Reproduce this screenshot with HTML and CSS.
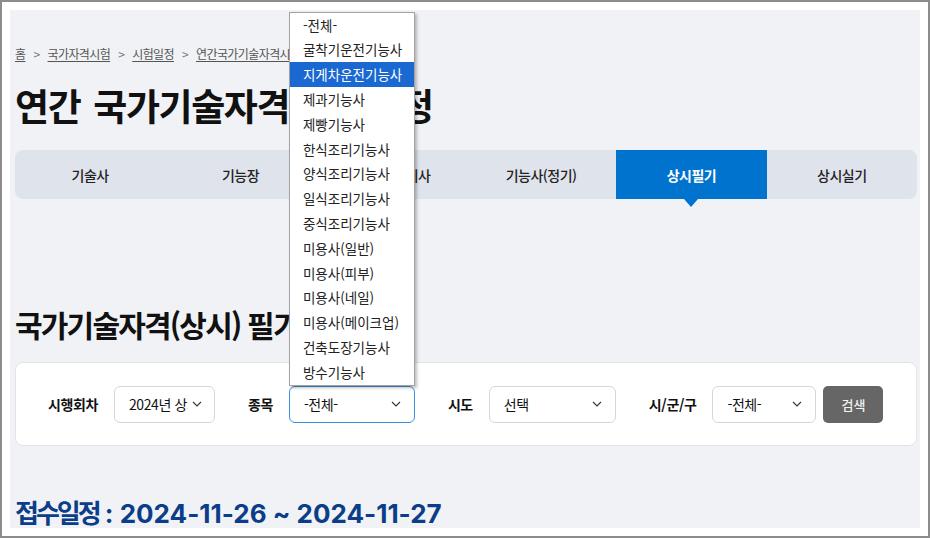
FILE: index.html
```html
<!DOCTYPE html>
<html lang="ko">
  <head>
    <meta charset="UTF-8" />
    <title>연간 국가기술자격 시험일정</title>
    <link rel="stylesheet" href="styles.css">
  </head>
  <body>
    <div class="frame">
      <div class="page">
        <nav class="breadcrumb">
          <a href="#">홈</a>
          <span class="sep">&gt;</span>
          <a href="#">국가자격시험</a>
          <span class="sep">&gt;</span>
          <a href="#">시험일정</a>
          <span class="sep">&gt;</span>
          <a href="#">연간국가기술자격시험일정</a>
        </nav>

        <h1 class="title">연간 국가기술자격 시험일정</h1>

        <ul class="tabs">
          <li>기술사</li>
          <li>기능장</li>
          <li>기사/산업기사</li>
          <li>기능사(정기)</li>
          <li class="active">상시필기</li>
          <li>상시실기</li>
        </ul>

        <h2 class="section-title">국가기술자격(상시) 필기시험 일정</h2>

        <form class="search-box">
          <div class="field">
            <label>시행회차</label>
            <div class="select select-round">
              <span class="select-text">2024년 상시(필기)</span>
              <svg class="chevron" width="10" height="6" viewBox="0 0 10 6"><path d="M1 1l4 4 4-4" fill="none" stroke="#333" stroke-width="1.1"/></svg>
            </div>
          </div>

          <div class="field">
            <label>종목</label>
            <div class="select select-jong focused">
              <span class="select-text">-전체-</span>
              <svg class="chevron" width="10" height="6" viewBox="0 0 10 6"><path d="M1 1l4 4 4-4" fill="none" stroke="#333" stroke-width="1.1"/></svg>

              <ul class="options">
                <li>-전체-</li>
                <li>굴착기운전기능사</li>
                <li class="hover">지게차운전기능사</li>
                <li>제과기능사</li>
                <li>제빵기능사</li>
                <li>한식조리기능사</li>
                <li>양식조리기능사</li>
                <li>일식조리기능사</li>
                <li>중식조리기능사</li>
                <li>미용사(일반)</li>
                <li>미용사(피부)</li>
                <li>미용사(네일)</li>
                <li>미용사(메이크업)</li>
                <li>건축도장기능사</li>
                <li>방수기능사</li>
              </ul>
            </div>
          </div>

          <div class="field">
            <label>시도</label>
            <div class="select select-sido">
              <span class="select-text">선택</span>
              <svg class="chevron" width="10" height="6" viewBox="0 0 10 6"><path d="M1 1l4 4 4-4" fill="none" stroke="#333" stroke-width="1.1"/></svg>
            </div>
          </div>

          <div class="field field-last">
            <label>시/군/구</label>
            <div class="select select-gu">
              <span class="select-text">-전체-</span>
              <svg class="chevron" width="10" height="6" viewBox="0 0 10 6"><path d="M1 1l4 4 4-4" fill="none" stroke="#333" stroke-width="1.1"/></svg>
            </div>
          </div>

          <button type="button" class="search-btn">검색</button>
        </form>

        <h3 class="period"><span class="period-label">접수일정</span> : 2024-11-26 ~ 2024-11-27</h3>
      </div>
    </div>
  </body>
</html>
```

FILE: styles.css
```css
html,
body {
  margin: 0;
  padding: 0;
  background-color: #fff;
}

body {
  font-family: "Noto Sans CJK KR", "Noto Sans", sans-serif;
  color: #111;
}

.frame {
  width: 930px;
  height: 538px;
  box-sizing: border-box;
  border: 2px solid #8c8c8c;
  padding: 8px;
}

.page {
  height: 518px;
  box-sizing: border-box;
  background-color: #f0f2f6;
  padding: 36px 3px 0 5px;
  overflow: hidden;
}

/* breadcrumb */
.breadcrumb {
  display: flex;
  align-items: center;
  gap: 6px;
  height: 16px;
  font-size: 12px;
  line-height: 16px;
  letter-spacing: -0.6px;
}

.breadcrumb a {
  color: #555;
  text-decoration: underline;
  text-underline-offset: 2px;
}

.breadcrumb .sep {
  color: #777;
  font-size: 12px;
  margin: 0 2px;
}

.title {
  margin: 23px 0 0;
  font-size: 37px;
  line-height: 40px;
  font-weight: 700;
  letter-spacing: -1.4px;
  word-spacing: 4px;
  color: #111;
}

/* tabs */
.tabs {
  list-style: none;
  margin: 25px 0 0;
  padding: 0;
  display: flex;
  height: 49px;
  background-color: #dfe3eb;
  border-radius: 8px;
}

.tabs li {
  flex: 1;
  display: flex;
  align-items: center;
  justify-content: center;
  font-size: 14px;
  font-weight: 500;
  letter-spacing: -0.5px;
  color: #222;
  position: relative;
}

.tabs li.active {
  background-color: #0073cf;
  color: #fff;
  font-weight: 700;
}

.tabs li.active::after {
  content: "";
  position: absolute;
  left: 50%;
  top: 100%;
  margin-left: -7px;
  border-left: 7px solid transparent;
  border-right: 7px solid transparent;
  border-top: 8px solid #0073cf;
}

.section-title {
  margin: 107px 0 0;
  font-size: 30px;
  line-height: 36px;
  font-weight: 700;
  letter-spacing: -1.8px;
  color: #111;
}

/* search form */
.search-box {
  margin-top: 20px;
  height: 84px;
  box-sizing: border-box;
  background-color: #fff;
  border: 1px solid #e1e4e9;
  border-radius: 8px;
  padding: 0 32px;
  display: flex;
  align-items: center;
}

.field {
  display: flex;
  align-items: center;
  gap: 16px;
  margin-right: 33px;
}

.field-last {
  margin-right: 7px;
}

.field label {
  font-size: 14px;
  font-weight: 700;
  letter-spacing: -0.4px;
  color: #111;
}

.select {
  position: relative;
  height: 37px;
  box-sizing: border-box;
  border: 1px solid #d4d6da;
  border-radius: 6px;
  background-color: #fff;
  display: flex;
  align-items: center;
  padding: 0 13px 0 14px;
}

.select-text {
  flex: 1;
  overflow: hidden;
  white-space: nowrap;
  font-size: 14px;
  letter-spacing: -0.4px;
  color: #111;
}

.chevron {
  flex: none;
  margin-left: 4px;
}

.select-round {
  width: 101px;
  padding-right: 12px;
}

.select-jong {
  width: 126px;
}

.select-sido {
  width: 127px;
}

.select-gu {
  width: 104px;
}

.select.focused {
  border-color: #3d8fe4;
}

/* open option list */
.options {
  position: absolute;
  left: -1px;
  right: -1px;
  bottom: 100%;
  margin: 0 0 1px;
  padding: 0;
  list-style: none;
  background-color: #fff;
  border: 1px solid #a3a3a3;
  box-shadow: 2px 2px 3px rgba(0, 0, 0, 0.25);
}

.options li {
  height: 24.8px;
  line-height: 24.8px;
  padding-left: 13px;
  font-size: 13.5px;
  color: #222;
  white-space: nowrap;
}

.options li.hover {
  background-color: #1a68d1;
  color: #fff;
}

.search-btn {
  width: 60px;
  height: 37px;
  border: none;
  border-radius: 5px;
  background-color: #666;
  color: #f2f2f2;
  font-family: "Noto Sans CJK KR", sans-serif;
  font-size: 13px;
  font-weight: 500;
  cursor: pointer;
}

.period {
  margin: 50px 0 0;
  font-family: "Inter", "Noto Sans CJK KR", sans-serif;
  font-size: 26px;
  line-height: 32px;
  font-weight: 700;
  letter-spacing: 0;
  color: #0c3d88;
}

.period-label {
  font-family: "Noto Sans CJK KR", sans-serif;
  letter-spacing: -3px;
}
```
